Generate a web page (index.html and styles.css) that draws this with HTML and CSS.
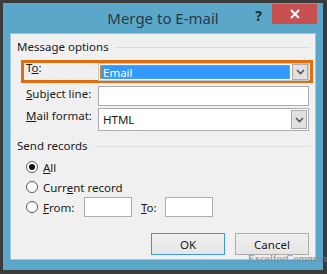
FILE: index.html
```html
<!DOCTYPE html>
<html>
<head>
<meta charset="utf-8">
<link rel="stylesheet" href="styles.css">
</head>
<body>
<div class="frame">
  <div class="titlebar">
    <div></div>
    <div class="title">Merge to E-mail</div>
    <div class="controls">
      <span class="help">?</span>
      <span class="close"><svg width="10" height="10" viewBox="0 0 10 10"><path d="M1 1L9 9M9 1L1 9" stroke="#fff" stroke-width="2"/></svg></span>
    </div>
  </div>
  <div class="panel">
    <div class="heading"><span>Message options</span><i class="rule"></i></div>
    <div class="row focus-row">
      <label class="lbl lbl-to">T<u>o</u>:</label>
      <div class="select sel-email">
        <span class="sel-text"><span class="hl">Email</span></span>
        <span class="dd"><svg width="9" height="6" viewBox="0 0 9 6"><path d="M1 1L4.5 4.5L8 1" fill="none" stroke="#555" stroke-width="1.6"/></svg></span>
      </div>
    </div>
    <div class="row row-subject">
      <label class="lbl"><u>S</u>ubject line:</label>
      <div class="input wide"></div>
    </div>
    <div class="row row-format">
      <label class="lbl"><u>M</u>ail format:</label>
      <div class="select sel-format">
        <span class="sel-text">HTML</span>
        <span class="dd"><svg width="9" height="6" viewBox="0 0 9 6"><path d="M1 1L4.5 4.5L8 1" fill="none" stroke="#555" stroke-width="1.6"/></svg></span>
      </div>
    </div>
    <div class="heading heading2"><span>Send records</span><i class="rule"></i></div>
    <div class="radios">
      <div class="radio-row"><span class="radio checked"></span><span><u>A</u>ll</span></div>
      <div class="radio-row"><span class="radio"></span><span>Curr<u>e</u>nt record</span></div>
      <div class="radio-row">
        <span class="radio"></span><span class="from-lbl"><u>F</u>rom:</span>
        <div class="input small"></div>
        <span class="to-lbl"><u>T</u>o:</span>
        <div class="input small"></div>
      </div>
    </div>
    <div class="buttons">
      <div class="btn btn-ok">OK</div>
      <div class="btn">Cancel</div>
    </div>
  </div>
</div>
<div class="watermark">ExcelforCommerce</div>
</body>
</html>
```

FILE: styles.css
```css
* { box-sizing: border-box; }
html, body { margin: 0; padding: 0; }
body {
  width: 327px;
  height: 274px;
  background: #3b3b3b;
  font-family: "Noto Sans", "Open Sans", sans-serif;
  font-size: 11.5px;
  color: #1a1a1a;
  overflow: hidden;
  position: relative;
}
.frame {
  margin: 3px 4px 0 3px;
  width: 320px;
  height: 267px;
  background: #5ba7ca;
  display: flex;
  flex-direction: column;
}
.titlebar {
  height: 30px;
  display: grid;
  grid-template-columns: 1fr auto 1fr;
}
.title {
  font-size: 15px;
  color: #2a3a44;
  line-height: 31px;
}
.controls {
  display: flex;
  justify-content: flex-end;
  align-items: flex-start;
  padding-right: 6px;
}
.help {
  font-weight: bold;
  font-size: 14px;
  color: #1f2a30;
  line-height: 16px;
  margin-top: 5px;
  margin-right: 10px;
}
.close {
  margin-top: 1px;
  width: 45px;
  height: 20px;
  background: #c75050;
  display: flex;
  align-items: center;
  justify-content: center;
}
.panel {
  margin: 0 7px;
  height: 227px;
  background: #f0f0f0;
  border: 1px solid #a5c3d6;
  display: flex;
  flex-direction: column;
}
.heading {
  display: flex;
  align-items: center;
  padding-left: 6px;
  padding-right: 5px;
  margin-top: 5px;
  line-height: 16px;
  height: 16px;
}
.heading .rule {
  flex: 1;
  height: 1px;
  background: #dcdcdc;
  margin-left: 6px;
}
.heading2 { margin-top: 7px; }
.row {
  display: flex;
  align-items: flex-start;
  padding-left: 15px;
}
.lbl {
  width: 72px;
  line-height: 16px;
}
.focus-row {
  margin-top: 5px;
  margin-left: 10px;
  width: 292px;
  height: 23px;
  border: 3px solid #e46c0a;
  padding-left: 2px;
}
.lbl-to { margin-top: -3px; width: 72px; }
.select, .input {
  background: #fff;
  border: 1px solid #abadb3;
}
.select {
  width: 211px;
  display: flex;
  align-items: stretch;
}
.sel-email { height: 18px; border-color: #c7c7c7; padding: 1px; }
.sel-text {
  flex: 1;
  display: flex;
  align-items: center;
  padding-left: 4px;
}
.sel-email .sel-text { padding-left: 0; padding-right: 2px; }
.hl {
  flex: 1;
  background: #3399ff;
  color: #fff;
  height: 14px;
  line-height: 13px;
  padding-left: 2px;
  border: 1px dotted #f08c2c;
}
.dd {
  width: 16px;
  background: #e1e1e1;
  border: 1px solid #acacac;
  display: flex;
  align-items: center;
  justify-content: center;
}
.sel-email .dd { margin: -1px -1px -1px 0; }
.row-subject { margin-top: 3px; }
.input.wide { width: 211px; height: 20px; }
.row-format { margin-top: 2px; }
.sel-format { height: 23px; }
.sel-format .dd { margin: 1px; }
.radios {
  margin-top: 3px;
  padding-left: 15px;
  display: flex;
  flex-direction: column;
}
.radio-row {
  height: 20px;
  display: flex;
  align-items: center;
}
.radio {
  width: 12px;
  height: 12px;
  border-radius: 50%;
  border: 1px solid #5a5a5a;
  background: #fff;
  margin-right: 5px;
  display: flex;
  align-items: center;
  justify-content: center;
}
.radio.checked::after {
  content: "";
  width: 6px;
  height: 6px;
  border-radius: 50%;
  background: #111;
}
.from-lbl { width: 41px; }
.to-lbl { width: 24px; margin-left: 9px; }
.input.small { width: 48px; height: 20px; border-color: #abadb3; }
.buttons {
  margin-top: 16px;
  display: flex;
  justify-content: flex-end;
  gap: 10px;
  padding-right: 6px;
}
.btn {
  width: 74px;
  height: 22px;
  border: 1px solid #acacac;
  background: linear-gradient(#f0f0f0, #e5e5e5);
  display: flex;
  align-items: center;
  justify-content: center;
}
.btn-ok { border-color: #3c98e6; }
.watermark {
  position: absolute;
  left: 248px;
  top: 252px;
  font-family: "Liberation Serif", serif;
  font-size: 11px;
  color: #8a8a8a;
  white-space: nowrap;
}
```
